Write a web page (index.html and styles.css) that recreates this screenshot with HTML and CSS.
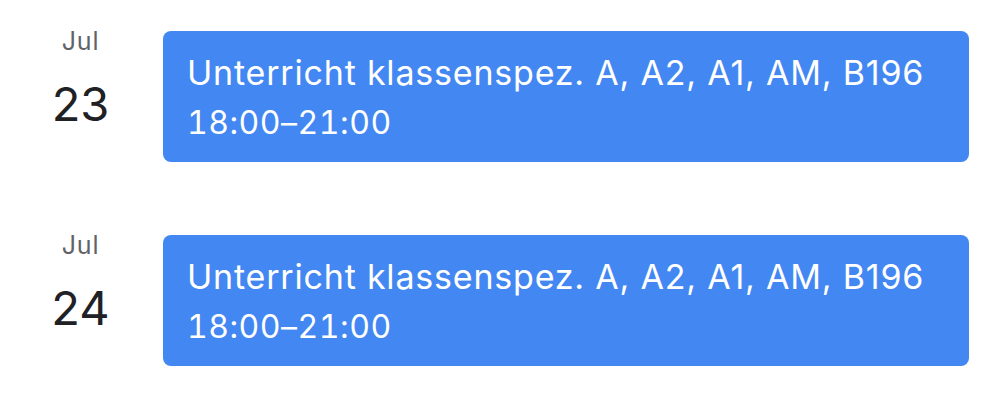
FILE: index.html
```html
<!DOCTYPE html>
<html lang="de">
<head>
<meta charset="utf-8">
<link rel="stylesheet" href="styles.css">
</head>
<body>
<div class="agenda">
  <div class="row">
    <div class="date">
      <div class="month">Jul</div>
      <div class="day">23</div>
    </div>
    <div class="event">
      <div class="title">Unterricht klassenspez. A, A2, A1, AM, B196</div>
      <div class="time">18:00–21:00</div>
    </div>
  </div>
  <div class="row">
    <div class="date">
      <div class="month">Jul</div>
      <div class="day">24</div>
    </div>
    <div class="event">
      <div class="title">Unterricht klassenspez. A, A2, A1, AM, B196</div>
      <div class="time">18:00–21:00</div>
    </div>
  </div>
</div>
</body>
</html>
```
FILE: styles.css
```css
html, body {
  margin: 0;
  padding: 0;
  background: #ffffff;
}
body {
  font-family: Inter, "Noto Sans", "Liberation Sans", sans-serif;
  width: 1000px;
  height: 409px;
  overflow: hidden;
}
.agenda {
  display: flex;
  flex-direction: column;
  gap: 73px;
  padding-top: 31px;
}
.row {
  display: flex;
  align-items: flex-start;
}
.date {
  width: 163px;
  flex: none;
  display: flex;
  flex-direction: column;
  align-items: center;
  padding-right: 2px;
  box-sizing: border-box;
}
.month {
  font-size: 25px;
  line-height: 20px;
  color: #5f6368;
  letter-spacing: 0.8px;
}
.day {
  font-size: 47px;
  line-height: 56px;
  color: #202124;
  margin-top: 25px;
}
.event {
  width: 806px;
  height: 131px;
  box-sizing: border-box;
  background: #4387f3;
  border-radius: 8px;
  padding: 22px 24px 0;
  color: #ffffff;
}
.title {
  font-size: 34px;
  line-height: 40px;
  letter-spacing: 0.8px;
}
.time {
  font-size: 32px;
  line-height: 38px;
  margin-top: 11px;
  letter-spacing: 0.5px;
  font-feature-settings: "tnum";
}
```
